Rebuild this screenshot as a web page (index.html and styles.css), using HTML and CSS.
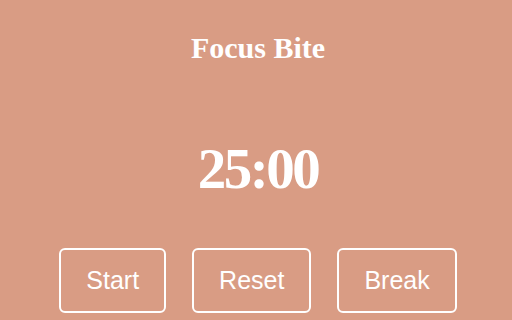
FILE: index.html
```html
<!DOCTYPE html>
<html>
<head>
<meta charset="utf-8">
<link rel="stylesheet" href="styles.css">
</head>
<body>
<main class="app">
  <h1 class="title">Focus Bite</h1>
  <div class="timer">25:00</div>
  <div class="controls">
    <button class="btn">Start</button>
    <button class="btn">Reset</button>
    <button class="btn">Break</button>
  </div>
</main>
</body>
</html>
```
FILE: styles.css
```css
html, body {
  margin: 0;
  height: 100%;
}
body {
  background: #d99c84;
  color: #ffffff;
  font-family: "Liberation Serif", "Times New Roman", serif;
  overflow: hidden;
}
.app {
  display: flex;
  flex-direction: column;
  align-items: center;
  padding: 31px 0 0 4px;
}
.title {
  margin: 0;
  font-size: 30px;
  font-weight: bold;
  line-height: normal;
}
.timer {
  margin-top: 71px;
  font-size: 57px;
  font-weight: bold;
  letter-spacing: -2.5px;
  line-height: normal;
}
.controls {
  display: flex;
  gap: 26px;
  margin-top: 47px;
}
.btn {
  font-family: "Liberation Sans", Arial, sans-serif;
  font-size: 25px;
  line-height: normal;
  color: #ffffff;
  background: transparent;
  border: 2px solid #ffffff;
  border-radius: 6px;
  padding: 16px 25px;
  margin: 0;
}
```
